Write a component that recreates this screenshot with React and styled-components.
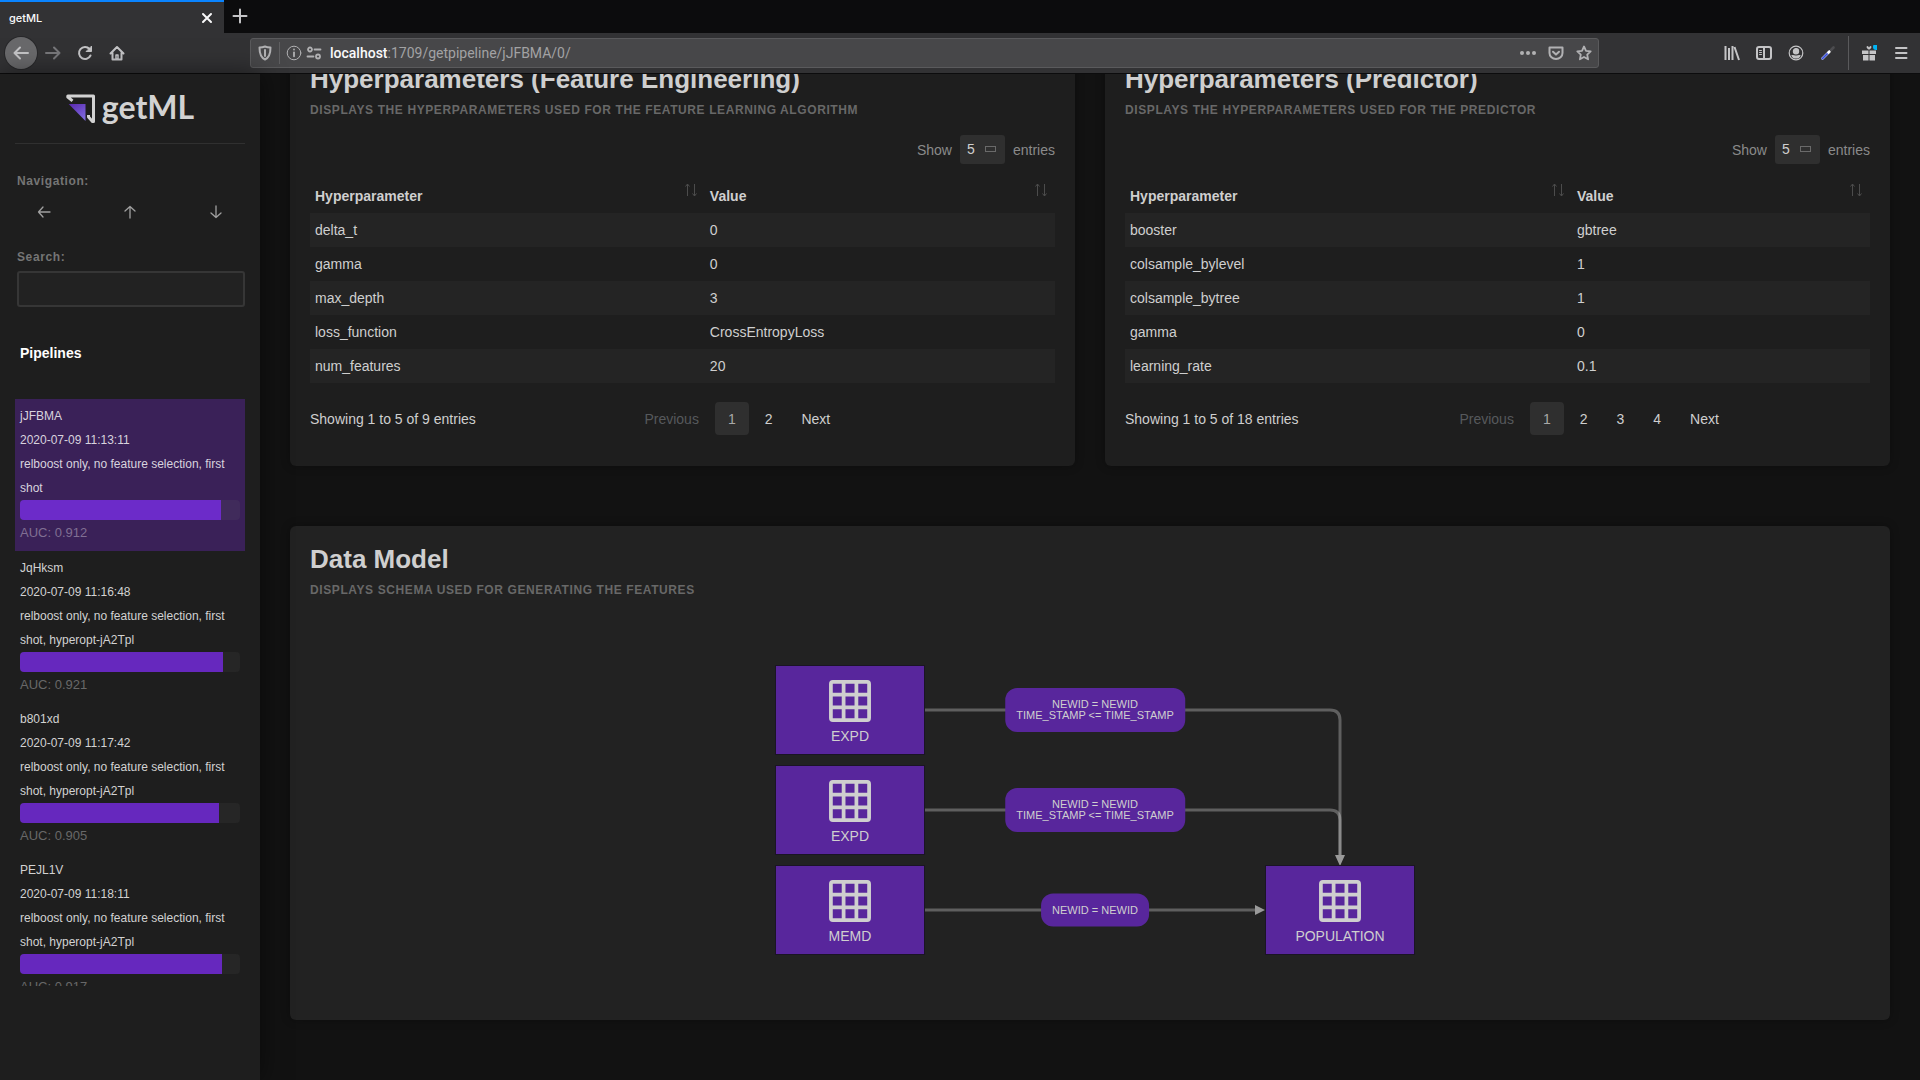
import React, { useLayoutEffect, useRef } from "react";
import styled, { createGlobalStyle } from "styled-components";

const GlobalStyle = createGlobalStyle`
  * { box-sizing: border-box; }
  body {
    margin: 0;
    background: #121212;
    color: #cfcfcf;
    font-family: "Liberation Sans", Arial, Helvetica, sans-serif;
    font-size: 14px;
  }
  button, input, select { font: inherit; color: inherit; }
  button { border: 0; padding: 0; background: none; cursor: pointer; }
`;

const Window = styled.div`
  display: flex;
  flex-direction: column;
  height: 100vh;
  overflow: hidden;
`;

/* ---------- Browser chrome ---------- */

const TabStrip = styled.div`
  display: flex;
  flex: none;
  height: 33px;
  background: #0c0c0d;
`;

const Tab = styled.div`
  display: flex;
  align-items: center;
  justify-content: space-between;
  width: 224px;
  padding: 0 10px 0 9px;
  border-top: 2px solid #0a84ff;
  background: #323234;
  color: #f9f9fa;
  font: 500 11px/16px Inter, sans-serif;
`;

const ChromeButton = styled.button`
  display: grid;
  place-items: center;
  flex: none;
  width: ${(p) => p.$size || 32}px;
  height: ${(p) => p.$size || 32}px;
  border-radius: 50%;
  color: ${(p) => (p.$dim ? "#77777a" : "#c4c4c6")};
  background: ${(p) => (p.$filled ? "#69696b" : "none")};
  box-shadow: ${(p) => (p.$filled ? "0 0 0 1px #28282a" : "none")};
`;

const Toolbar = styled.div`
  display: flex;
  align-items: center;
  flex: none;
  height: 41px;
  padding: 0 3px 0 5px;
  background: #323234;
  border-bottom: 1px solid #0c0c0d;
`;

const AddressBar = styled.div`
  display: flex;
  align-items: center;
  flex: 1;
  height: 30px;
  margin: 0 117px;
  padding: 0 6px;
  gap: 6px;
  border: 1px solid #5a5a5c;
  border-radius: 3px;
  background: #474749;
  color: #b1b1b3;
`;

const AddressDivider = styled.span`
  width: 1px;
  height: 22px;
  background: #5f5f61;
`;

const AddressText = styled.a`
  flex: 1;
  padding-left: 2px;
  color: #a2a2a4;
  font: 400 14px/20px Roboto, sans-serif;
  text-decoration: none;
  strong { color: #f9f9fa; font-weight: 500; }
`;

const SiteIcons = styled.span`
  display: flex;
  gap: 4px;
`;

const AddressIcons = styled.span`
  display: flex;
  align-items: center;
  gap: 12px;
`;

const ToolbarDivider = styled.span`
  width: 1px;
  height: 34px;
  margin: 0 4px;
  background: #5a5a5c;
`;

const Icon = ({ size = 16, box = 16, width = 2, children }) => (
  <svg
    width={size}
    height={size}
    viewBox={`0 0 ${box} ${box}`}
    fill="none"
    stroke="currentColor"
    strokeWidth={width}
    strokeLinecap="round"
    strokeLinejoin="round"
    aria-hidden="true"
  >
    {children}
  </svg>
);

/* ---------- Page layout ---------- */

const Page = styled.div`
  display: flex;
  flex: 1;
  min-height: 0;
`;

const Sidebar = styled.aside`
  display: flex;
  flex-direction: column;
  flex: none;
  width: 260px;
  padding: 0 15px 94px;
  background: #1e1e1e;
  box-shadow: 0 0 24px rgba(0, 0, 0, 0.5);
  z-index: 1;
`;

const Brand = styled.a`
  display: flex;
  align-items: center;
  justify-content: center;
  flex: none;
  height: 70px;
  gap: 6px;
  border-bottom: 1px solid #303030;
  color: #d2d2d2;
  text-decoration: none;
`;

const BrandName = styled.span`
  padding-bottom: 4px;
  font: 700 32px/32px Lato, sans-serif;
`;

const SideLabel = styled.label`
  flex: none;
  padding-left: 2px;
  color: #757575;
  font-size: 12px;
  font-weight: bold;
  line-height: 16px;
  letter-spacing: 0.05em;
`;

const NavHeading = styled(SideLabel).attrs({ as: "div" })`
  margin-top: 29px;
`;

const NavRow = styled.nav`
  display: flex;
  justify-content: space-between;
  flex: none;
  margin: 12px 18px 26px;
  color: #a0a0a0;
`;

const NavButton = styled.button`
  display: grid;
  place-items: center;
  width: 22px;
  height: 22px;
`;

const SearchBox = styled.input`
  flex: none;
  height: 36px;
  margin: 6px 0 0 2px;
  padding: 0 8px;
  border: 2px solid #363636;
  border-radius: 3px;
  background: #222;
  outline: none;
`;

const ListHeading = styled.h2`
  flex: none;
  margin: 36px 0;
  padding-left: 5px;
  color: #fff;
  font-size: 14px;
  line-height: 20px;
`;

const PipelineList = styled.ul`
  flex: 1;
  min-height: 0;
  margin: 0;
  padding: 0;
  overflow: hidden;
  list-style: none;
`;

const PipelineItem = styled.li`
  padding: 5px 5px ${(p) => (p.$active ? 7 : 6)}px;
  background: ${(p) => (p.$active ? "#3a2158" : "none")};
  color: ${(p) => (p.$active ? "#d8d3de" : "#d2d2d2")};
  font-size: 12px;
  line-height: 24px;
`;

const Meter = styled.div`
  height: 20px;
  border-radius: 4px;
  overflow: hidden;
  background: ${(p) => (p.$active ? "#402b5b" : "#262626")};
`;

const MeterFill = styled.div`
  height: 100%;
  background: ${(p) => (p.$active ? "#6c2bc9" : "#6628be")};
`;

const Score = styled.div`
  height: 24px;
  padding-top: 1px;
  color: ${(p) => (p.$active ? "#806f93" : "#686868")};
  font-size: 13px;
`;

const Main = styled.main`
  display: flex;
  flex-direction: column;
  flex: 1;
  min-width: 0;
  gap: 60px;
  padding: 30px 30px 60px;
  overflow-y: auto;
  scrollbar-width: none;
`;

const CardRow = styled.div`
  display: grid;
  flex: none;
  grid-template-columns: 1fr 1fr;
  gap: 30px;
`;

const Card = styled.section`
  flex: none;
  padding: 17px 20px 31px;
  border-radius: 6px;
  background: ${(p) => (p.$raised ? "#222" : "#1e1e1e")};
  box-shadow: 0 0 10px rgba(0, 0, 0, 0.3);
`;

const CardTitle = styled.h2`
  margin: 0;
  font-size: 26px;
  line-height: 32px;
`;

const CardCaption = styled.p`
  margin: 7px 0 0;
  color: #686868;
  font-size: 12px;
  font-weight: bold;
  line-height: 16px;
  letter-spacing: 0.05em;
  text-transform: uppercase;
`;

const LengthRow = styled.div`
  display: flex;
  justify-content: flex-end;
  margin-top: 17px;
`;

const LengthLabel = styled.label`
  display: flex;
  align-items: center;
  gap: 8px;
  color: #8a8a8a;
  line-height: 28px;
`;

const SelectShell = styled.span`
  position: relative;
  display: block;
`;

const LengthSelect = styled.select`
  display: block;
  appearance: none;
  width: 45px;
  height: 29px;
  padding: 0 7px 2px;
  border: 0;
  border-radius: 3px;
  background: #2f2f2f;
  color: #cfcfcf;
`;

const SelectMark = styled.span`
  position: absolute;
  top: 11px;
  right: 9px;
  width: 11px;
  height: 6px;
  border: 1px solid #6a6a6a;
  pointer-events: none;
`;

const Table = styled.table`
  width: 100%;
  margin-top: 14px;
  border-collapse: collapse;
  table-layout: fixed;
`;

const HeadCell = styled.th`
  width: ${(p) => p.$width};
  height: 35px;
  padding: 0 5px;
  text-align: left;
`;

const HeadInner = styled.div`
  display: flex;
  justify-content: space-between;
  padding-right: 3px;
  line-height: 34px;
`;

const SortButton = styled.button`
  display: grid;
  place-items: center;
  width: 12px;
  height: 22px;
  color: #4c4c4c;
`;

const BodyRow = styled.tr`
  &:nth-child(odd) { background: #242424; }
`;

const BodyCell = styled.td`
  height: 34px;
  padding: 0 5px;
`;

const TableFooter = styled.div`
  display: grid;
  grid-template-columns: 5fr 7fr;
  align-items: center;
  margin-top: 19px;
`;

const Pager = styled.nav`
  display: flex;
  gap: 3px;
  padding-left: 11px;
`;

const PageButton = styled.button`
  height: 33px;
  padding: 0 13px;
  border-radius: 4px;
  background: ${(p) => (p.$current ? "#2f2f2f" : "none")};
  color: ${(p) => (p.$current ? "#a8a8a8" : "inherit")};
  &:disabled { color: #56595c; }
`;

/* ---------- Data model ---------- */

const Canvas = styled.div`
  position: relative;
  width: 650px;
  height: 290px;
  margin: 67px auto 34px;
`;

const Edges = styled.svg`
  position: absolute;
  inset: 0;
`;

const Node = styled.div`
  position: absolute;
  left: ${(p) => p.$x}px;
  top: ${(p) => p.$y}px;
  display: flex;
  flex-direction: column;
  align-items: center;
  width: 150px;
  height: 90px;
  padding-top: 14px;
  gap: 6px;
  border: 1px solid #1b1426;
  background: #58269c;
  line-height: 16px;
`;

const JoinLabel = styled.div`
  position: absolute;
  left: 330px;
  top: ${(p) => p.$y}px;
  transform: translate(-50%, -50%);
  padding: 11px;
  border-radius: 12px;
  background: #58269c;
  font-size: 11px;
  line-height: 11px;
  text-align: center;
  white-space: nowrap;
`;

const TableGlyph = () => (
  <svg width="42" height="42" viewBox="0 0 42 42" fill="none" stroke="#cfcfcf" strokeWidth="3.75" aria-hidden="true">
    <rect x="1.9" y="1.9" width="38.2" height="38.2" rx="2" />
    <path d="M14.6 2v38M27.4 2v38M2 14.6h38M2 27.4h38" />
  </svg>
);

const pipelines = [
  { name: "jJFBMA", time: "2020-07-09 11:13:11", tags: "relboost only, no feature selection, first shot", auc: 0.912, active: true },
  { name: "JqHksm", time: "2020-07-09 11:16:48", tags: "relboost only, no feature selection, first shot, hyperopt-jA2Tpl", auc: 0.921 },
  { name: "b801xd", time: "2020-07-09 11:17:42", tags: "relboost only, no feature selection, first shot, hyperopt-jA2Tpl", auc: 0.905 },
  { name: "PEJL1V", time: "2020-07-09 11:18:11", tags: "relboost only, no feature selection, first shot, hyperopt-jA2Tpl", auc: 0.917 },
];

const panels = [
  {
    id: "features",
    title: "Hyperparameters (Feature Engineering)",
    caption: "Displays the hyperparameters used for the feature learning algorithm",
    split: "53%",
    rows: [["delta_t", "0"], ["gamma", "0"], ["max_depth", "3"], ["loss_function", "CrossEntropyLoss"], ["num_features", "20"]],
    total: 9,
    pages: [1, 2],
  },
  {
    id: "predictor",
    title: "Hyperparameters (Predictor)",
    caption: "Displays the hyperparameters used for the predictor",
    split: "60%",
    rows: [["booster", "gbtree"], ["colsample_bylevel", "1"], ["colsample_bytree", "1"], ["gamma", "0"], ["learning_rate", "0.1"]],
    total: 18,
    pages: [1, 2, 3, 4],
  },
];

const nodes = [
  { name: "EXPD", x: 10, y: 0 },
  { name: "EXPD", x: 10, y: 100 },
  { name: "MEMD", x: 10, y: 200 },
  { name: "POPULATION", x: 500, y: 200 },
];

const joins = [
  { y: 45, lines: ["NEWID = NEWID", "TIME_STAMP <= TIME_STAMP"] },
  { y: 145, lines: ["NEWID = NEWID", "TIME_STAMP <= TIME_STAMP"] },
  { y: 245, lines: ["NEWID = NEWID"] },
];

function BrowserChrome() {
  return (
    <>
      <TabStrip>
        <Tab>
          <span>getML</span>
          <ChromeButton $size={14} aria-label="Close tab">
            <Icon size={14} box={14} width={2}><path d="M3 3l8 8M11 3l-8 8" stroke="#f9f9fa" /></Icon>
          </ChromeButton>
        </Tab>
        <ChromeButton aria-label="New tab">
          <Icon><path d="M8 1.500v13M1.500 8h13" /></Icon>
        </ChromeButton>
      </TabStrip>
      <Toolbar>
        <ChromeButton $filled aria-label="Back">
          <Icon><path d="M15 8H1.500M7 2.500L1.500 8 7 13.500" /></Icon>
        </ChromeButton>
        <ChromeButton $dim aria-label="Forward">
          <Icon><path d="M1 8h13.500M9 2.500L14.500 8 9 13.500" /></Icon>
        </ChromeButton>
        <ChromeButton aria-label="Reload">
          <Icon><path d="M13.500 10.500A6 6 0 1 1 12.500 4" /><path d="M14.500 1.500v5h-5z" fill="currentColor" strokeWidth="1" /></Icon>
        </ChromeButton>
        <ChromeButton aria-label="Home">
          <Icon><path d="M1.500 8.500L8 2l6.500 6.500M3.500 8v6.500h9V8" /><path d="M7 10h2v4H7z" strokeWidth="1.500" /></Icon>
        </ChromeButton>
        <AddressBar>
          <Icon><path d="M8 1.500c2 .8 3.800 1 5.500 1C13.500 8 12.500 12.500 8 14.500 3.500 12.500 2.500 8 2.500 2.500c1.700 0 3.500-.2 5.500-1z" /><path d="M8 5v6" /></Icon>
          <AddressDivider />
          <SiteIcons>
            <Icon width={1}><circle cx="8" cy="8" r="6.800" /><path d="M8 7.300v4" strokeWidth="1.800" /><path d="M8 4.500v.1" strokeWidth="1.800" /></Icon>
            <Icon width={1.8}><circle cx="4" cy="4.500" r="2" /><path d="M8.500 4.500h6M1.500 11.500h6" /><circle cx="12" cy="11.500" r="2" /></Icon>
          </SiteIcons>
          <AddressText href="#"><strong>localhost</strong>:1709/getpipeline/jJFBMA/0/</AddressText>
          <AddressIcons>
            <Icon width={0}><g fill="currentColor"><circle cx="2" cy="8" r="2" /><circle cx="8" cy="8" r="2" /><circle cx="14" cy="8" r="2" /></g></Icon>
            <Icon><path d="M1.500 2.500h13V8a6.500 6 0 0 1-13 0z" /><path d="M5 6.800l3 2.800 3-2.800" /></Icon>
            <Icon width={1.8}><path d="M8 1.500l2 4.300 4.700.6-3.500 3.200.9 4.700L8 12l-4.100 2.300.9-4.700L1.300 6.400 6 5.800z" /></Icon>
          </AddressIcons>
        </AddressBar>
        <ChromeButton aria-label="Library">
          <Icon><path d="M1.500 1v14M5 3v12M8.500 1v14M10.500 2L15 15" strokeLinecap="butt" /></Icon>
        </ChromeButton>
        <ChromeButton aria-label="Sidebars">
          <Icon><rect x="1" y="2" width="14" height="12" rx="2" /><path d="M8 2v12" /><path d="M3.500 5.500h2M3.500 7.500h2M3.500 9.500h2" strokeWidth="1" /></Icon>
        </ChromeButton>
        <ChromeButton aria-label="Account">
          <Icon width={1.2}><circle cx="8" cy="8" r="6.800" /><circle cx="8" cy="6.200" r="2.600" fill="currentColor" /><path d="M4 10.500c1.500 0 2.200.7 4 .7s2.500-.7 4-.7c-.7 1.600-2.200 2.500-4 2.500s-3.300-.9-4-2.500z" fill="currentColor" /></Icon>
        </ChromeButton>
        <ChromeButton aria-label="Color picker">
          <Icon width={2.6}><path d="M2.500 13.500L8 8" stroke="#a9b4ee" /><path d="M2.500 13.500l5-5" stroke="#3a50d8" strokeWidth="1.600" /><path d="M8.500 7.500L9.500 6.500" stroke="#fff" /><path d="M11 5l2.500-2.500" stroke="#4c4c4f" /></Icon>
        </ChromeButton>
        <ToolbarDivider />
        <ChromeButton aria-label="What's new">
          <Icon width={0}>
            <path d="M1 5.500h6.500v3.500H1zM8.500 5.500H15v3.500H8.500zM2 10h5.500v5.500H2zM8.500 10H14v5.500H8.500z" fill="currentColor" />
            <path d="M7.500 3.500L6.500 2M8.500 3.500L9.500 2" stroke="currentColor" strokeWidth="2" />
            <circle cx="15" cy="2" r="3" fill="#00b3f4" />
          </Icon>
        </ChromeButton>
        <ChromeButton aria-label="Menu">
          <Icon><path d="M3 3h10.500M3 8h10.500M3 13h10.500" /></Icon>
        </ChromeButton>
      </Toolbar>
    </>
  );
}

function HyperparameterCard({ id, title, caption, split, rows, total, pages }) {
  return (
    <Card>
      <CardTitle>{title}</CardTitle>
      <CardCaption>{caption}</CardCaption>
      <LengthRow>
        <LengthLabel htmlFor={`${id}-length`}>
          Show
          <SelectShell>
            <LengthSelect id={`${id}-length`} defaultValue="5">
              <option>5</option>
            </LengthSelect>
            <SelectMark />
          </SelectShell>
          entries
        </LengthLabel>
      </LengthRow>
      <Table>
        <thead>
          <tr>
            {["Hyperparameter", "Value"].map((name, i) => (
              <HeadCell key={name} $width={i === 0 ? split : "auto"}>
                <HeadInner>
                  {name}
                  <SortButton aria-label={`Sort by ${name}`}>
                    <svg width="12" height="14" viewBox="0 0 12 14" fill="none" stroke="currentColor" aria-hidden="true">
                      <path d="M2.500 13V1M.5 3.500l2-2.500 2 2.500M9.500 1v12M7.500 10.500l2 2.500 2-2.500" />
                    </svg>
                  </SortButton>
                </HeadInner>
              </HeadCell>
            ))}
          </tr>
        </thead>
        <tbody>
          {rows.map(([name, value]) => (
            <BodyRow key={name}>
              <BodyCell>{name}</BodyCell>
              <BodyCell>{value}</BodyCell>
            </BodyRow>
          ))}
        </tbody>
      </Table>
      <TableFooter>
        <span>{`Showing 1 to 5 of ${total} entries`}</span>
        <Pager aria-label="Pages">
          <PageButton disabled>Previous</PageButton>
          {pages.map((n) => (
            <PageButton key={n} $current={n === 1}>{n}</PageButton>
          ))}
          <PageButton>Next</PageButton>
        </Pager>
      </TableFooter>
    </Card>
  );
}

function DataModelCard() {
  return (
    <Card $raised>
      <CardTitle>Data Model</CardTitle>
      <CardCaption>Displays schema used for generating the features</CardCaption>
      <Canvas>
        <Edges width="650" height="290" fill="none" stroke="#fff" strokeOpacity="0.28" strokeWidth="3" aria-hidden="true">
          <path d="M160 45H565Q575 45 575 55V190" />
          <path d="M160 145H565Q575 145 575 155V190" />
          <path d="M160 245H490" />
          <path d="M570 190h10l-5 11zM490 240v10l10-5z" fill="#9a9a9a" stroke="none" />
        </Edges>
        {nodes.map((n) => (
          <Node key={`${n.x}-${n.y}`} $x={n.x} $y={n.y}>
            <TableGlyph />
            <span>{n.name}</span>
          </Node>
        ))}
        {joins.map((j) => (
          <JoinLabel key={j.y} $y={j.y}>
            {j.lines.map((line) => <div key={line}>{line}</div>)}
          </JoinLabel>
        ))}
      </Canvas>
    </Card>
  );
}

export default function App() {
  const mainRef = useRef(null);

  // The page opens at the data model, at the end of the content.
  useLayoutEffect(() => {
    mainRef.current.scrollTop = mainRef.current.scrollHeight;
  }, []);

  return (
    <Window>
      <GlobalStyle />
      <BrowserChrome />
      <Page>
        <Sidebar>
          <Brand href="#">
            <svg width="30" height="30" viewBox="0 0 30 30" fill="none" aria-hidden="true">
              <defs>
                <linearGradient id="brandFill" x1="0" y1="0" x2="0.6" y2="1">
                  <stop offset="0" stopColor="#5a28b0" />
                  <stop offset="1" stopColor="#7d68dc" />
                </linearGradient>
              </defs>
              <path d="M6.500 6.800L1.800 3V2H27.500V27.500H26.500L22.500 23V21" stroke="#d2d2d2" strokeWidth="3" strokeLinejoin="round" />
              <path d="M2.700 10H19.500V27z" fill="url(#brandFill)" />
            </svg>
            <BrandName>getML</BrandName>
          </Brand>
          <NavHeading>Navigation:</NavHeading>
          <NavRow aria-label="Navigation">
            <NavButton aria-label="Back"><Icon size={14} box={14} width={1.3}><path d="M13 7H1.500M6 2L1.500 7 6 12" /></Icon></NavButton>
            <NavButton aria-label="Up"><Icon size={14} box={14} width={1.3}><path d="M7 13V1.500M2 6l5-4.500L12 6" /></Icon></NavButton>
            <NavButton aria-label="Down"><Icon size={14} box={14} width={1.3}><path d="M7 1v11.500M2 8l5 4.500L12 8" /></Icon></NavButton>
          </NavRow>
          <SideLabel htmlFor="pipeline-search">Search:</SideLabel>
          <SearchBox id="pipeline-search" type="text" />
          <ListHeading>Pipelines</ListHeading>
          <PipelineList>
            {pipelines.map((p) => (
              <PipelineItem key={p.name} $active={p.active}>
                <div>{p.name}</div>
                <div>{p.time}</div>
                <div>{p.tags}</div>
                <Meter $active={p.active}>
                  <MeterFill $active={p.active} style={{ width: `${p.auc * 100}%` }} />
                </Meter>
                <Score $active={p.active}>AUC: {p.auc}</Score>
              </PipelineItem>
            ))}
          </PipelineList>
        </Sidebar>
        <Main ref={mainRef}>
          <CardRow>
            {panels.map((panel) => <HyperparameterCard key={panel.id} {...panel} />)}
          </CardRow>
          <DataModelCard />
        </Main>
      </Page>
    </Window>
  );
}
